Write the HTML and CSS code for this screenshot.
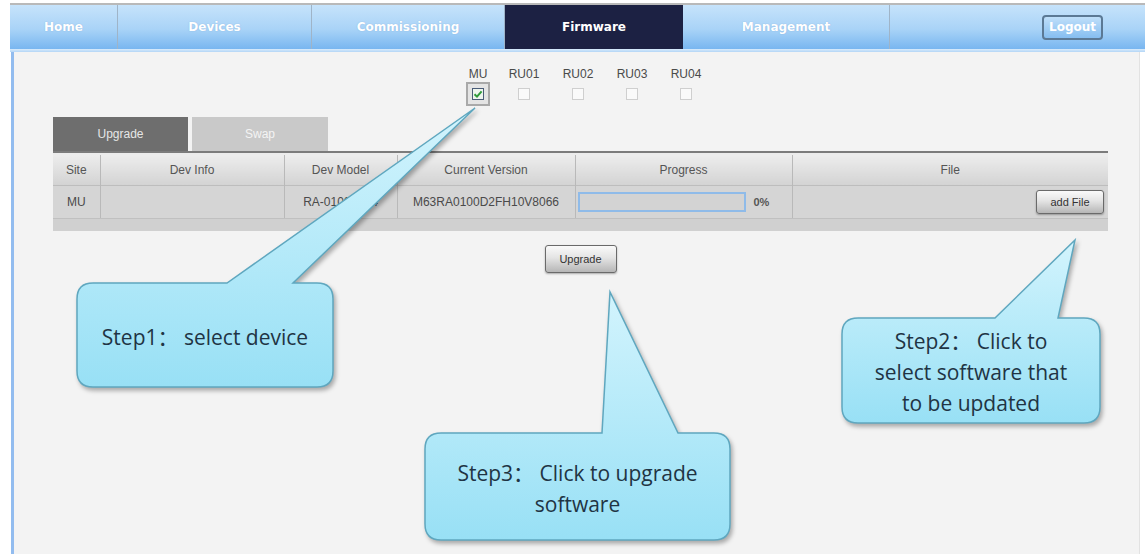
FILE: index.html
```html
<!DOCTYPE html>
<html lang="en">
<head>
    <meta charset="UTF-8">
    <title>Firmware Upgrade</title>
    <link rel="stylesheet" href="styles.css">
</head>
<body>
    <div class="page">
        <nav class="nav">
            <a class="nav-item w-home">Home</a>
            <a class="nav-item w-devices">Devices</a>
            <a class="nav-item w-comm">Commissioning</a>
            <a class="nav-item w-firm active">Firmware</a>
            <a class="nav-item w-mgmt">Management</a>
            <div class="nav-rest">
                <span class="logout">Logout</span>
            </div>
        </nav>
        <div class="nav-strip"></div>

        <main class="panel">
            <div class="devices">
                <label class="dev dev-first">
                    <span class="dev-name">MU</span>
                    <span class="box selected">
                        <span class="check on">
                            <svg width="10" height="10" viewBox="0 0 10 10"><path d="M1.5 5.2 L4 7.6 L8.6 2.4" fill="none" stroke="#2f9a3a" stroke-width="2"/></svg>
                        </span>
                    </span>
                </label>
                <label class="dev"><span class="dev-name">RU01</span><span class="box"><span class="check"></span></span></label>
                <label class="dev"><span class="dev-name">RU02</span><span class="box"><span class="check"></span></span></label>
                <label class="dev"><span class="dev-name">RU03</span><span class="box"><span class="check"></span></span></label>
                <label class="dev"><span class="dev-name">RU04</span><span class="box"><span class="check"></span></span></label>
            </div>

            <div class="tabs">
                <span class="tab current">Upgrade</span>
                <span class="tab">Swap</span>
            </div>

            <div class="grid">
                <table>
                    <colgroup>
                        <col class="c-site">
                        <col class="c-info">
                        <col class="c-model">
                        <col class="c-ver">
                        <col class="c-prog">
                        <col class="c-file">
                    </colgroup>
                    <thead>
                        <tr>
                            <th>Site</th>
                            <th>Dev Info</th>
                            <th>Dev Model</th>
                            <th>Current Version</th>
                            <th>Progress</th>
                            <th>File</th>
                        </tr>
                    </thead>
                    <tbody>
                        <tr>
                            <td>MU</td>
                            <td></td>
                            <td>RA-0100D-V4</td>
                            <td>M63RA0100D2FH10V8066</td>
                            <td>
                                <div class="progress">
                                    <span class="bar"></span>
                                    <span class="pct">0%</span>
                                </div>
                            </td>
                            <td class="file-cell"><button class="btn small">add File</button></td>
                        </tr>
                    </tbody>
                </table>
                <div class="grid-foot"></div>
            </div>

            <div class="actions">
                <button class="btn">Upgrade</button>
            </div>
        </main>
    </div>

    <!-- help callouts drawn over the page -->
    <svg class="callouts" width="1145" height="554" viewBox="0 0 1145 554">
        <defs>
            <linearGradient id="bubble" x1="0" y1="0" x2="0" y2="1">
                <stop offset="0" stop-color="#d3f4fd"/>
                <stop offset="1" stop-color="#98e0f5"/>
            </linearGradient>
        </defs>
        <path class="bubble" d="M93 283 L227 283 L475 108 L293 283 L317 283 Q333 283 333 299 L333 371 Q333 387 317 387 L93 387 Q77 387 77 371 L77 299 Q77 283 93 283 Z"/>
        <path class="bubble" d="M858 318 L995 318 L1075 240 L1058 318 L1084 318 Q1100 318 1100 334 L1100 407 Q1100 423 1084 423 L858 423 Q842 423 842 407 L842 334 Q842 318 858 318 Z"/>
        <path class="bubble" d="M441 433 L602 433 L610 292 L678 433 L714 433 Q730 433 730 449 L730 524 Q730 540 714 540 L441 540 Q425 540 425 524 L425 449 Q425 433 441 433 Z"/>
    </svg>
    <div class="note note-1">Step1： select device</div>
    <div class="note note-2">Step2： Click to<br>select software that<br>to be updated</div>
    <div class="note note-3">Step3： Click to upgrade<br>software</div>
</body>
</html>
```

FILE: styles.css
```css
body {
    margin: 0;
    background: #fff;
    font-family: "Liberation Sans", Arial, sans-serif;
    color: #444;
    overflow: hidden;
}
.page {
    padding: 3px 0 0 10px;
}

/* top navigation */
.nav {
    display: flex;
    height: 44px;
    border-top: 2px solid #b9b9b9;
    background: linear-gradient(#c6e3fb, #a9d3f7 55%, #78b6f0);
}
.nav-item {
    display: flex;
    align-items: center;
    justify-content: center;
    color: #fff;
    font-family: "DejaVu Sans", Verdana, sans-serif;
    font-weight: bold;
    font-size: 12px;
    text-shadow: 0 0 1px rgba(80,130,190,0.5);
    border-right: 1px solid #9fb4c8;
}
.w-home { width: 107px; }
.w-devices { width: 193px; }
.w-comm { width: 192px; }
.w-firm { width: 178px; }
.w-mgmt { width: 206px; }
.nav-item.active {
    background: #1c2143;
    border-right: none;
    text-shadow: none;
}
.nav-rest {
    flex: 1;
    display: flex;
    align-items: center;
    padding-left: 152px;
}
.logout {
    display: inline-block;
    padding: 2px 5px;
    height: 17px;
    line-height: 17px;
    border: 2px solid #5b7995;
    border-radius: 4px;
    color: #fff;
    font-family: "DejaVu Sans", Verdana, sans-serif;
    font-weight: bold;
    font-size: 12px;
    background: linear-gradient(#bfdffa, #86bef0);
}
.nav-strip {
    height: 3px;
    background: linear-gradient(#d9ecfc, #b3d5f6);
}

/* content panel */
.panel {
    margin-left: 1px;
    margin-right: 5px;
    min-height: 502px;
    background: #f3f3f3;
    border-left: 3px solid #92bcef;
    border-right: 1px solid #e2e2e2;
}
.devices {
    display: flex;
    padding-top: 15px;
    margin-left: 445px;
}
.dev {
    width: 54px;
    display: flex;
    flex-direction: column;
    align-items: center;
}
.dev-first {
    width: 38px;
}
.dev-name {
    font-size: 12px;
    line-height: 15px;
    color: #4a4a4a;
}
.box {
    width: 24px;
    height: 24px;
    display: flex;
    align-items: center;
    justify-content: center;
    box-sizing: border-box;
}
.box.selected {
    border: 2px solid #a9a9a9;
    background: #e4e4e4;
}
.check {
    width: 12px;
    height: 12px;
    box-sizing: border-box;
    border: 1px solid #cfcfcf;
    background: #fafafa;
    display: flex;
    align-items: center;
    justify-content: center;
}
.check.on {
    border-color: #4a5c78;
    background: #eef5ee;
}

/* tabs */
.tabs {
    display: flex;
    gap: 4px;
    margin: 11px 0 0 39px;
}
.tab {
    width: 136px;
    height: 34px;
    line-height: 34px;
    text-align: center;
    font-size: 12px;
    color: #f4f4f4;
    background: #c9c9c9;
}
.tab.current {
    width: 135px;
    background: #6e6e6e;
    color: #e6e6e6;
}

/* device table */
.grid {
    margin-left: 39px;
    width: 1055px;
    border-top: 2px solid #7c7c7c;
    padding-top: 2px;
    background: #ececec;
}
table {
    width: 1055px;
    border-collapse: collapse;
    table-layout: fixed;
}
.c-site { width: 47px; }
.c-info { width: 184px; }
.c-model { width: 113px; }
.c-ver { width: 178px; }
.c-prog { width: 217px; }
.c-file { width: 316px; }
th, td {
    font-size: 12px;
    font-weight: normal;
    color: #555;
    text-align: center;
    border-right: 1px solid #b9b9b9;
    padding: 0;
    white-space: nowrap;
    overflow: hidden;
}
th:last-child, td:last-child {
    border-right: none;
}
th {
    height: 30px;
    background: linear-gradient(#ededed, #d3d3d3);
}
td {
    height: 32px;
    background: #d5d5d5;
    border-top: 1px solid #bdbdbd;
    color: #4a4a4a;
}
.progress {
    display: flex;
    align-items: center;
    gap: 8px;
    padding-left: 2px;
}
.bar {
    width: 164px;
    height: 16px;
    border: 2px solid #8fbbe9;
    background: #d3d3d3;
}
.pct {
    font-size: 11px;
    font-weight: bold;
    color: #555;
}
.file-cell {
    text-align: right;
    padding-right: 4px;
}
.grid-foot {
    height: 12px;
    background: #d0d0d0;
    border-top: 1px solid #c0c0c0;
}

/* buttons */
.btn {
    font-family: "Liberation Sans", Arial, sans-serif;
    font-size: 11px;
    color: #333;
    width: 72px;
    height: 28px;
    border: 1px solid #6a6a6a;
    border-radius: 3px;
    background: linear-gradient(#fafafa, #e4e4e4 45%, #b6b6b6);
    box-shadow: 0 1px 2px rgba(0,0,0,0.3);
}
.btn.small {
    width: 68px;
    height: 24px;
}
.actions {
    width: 1055px;
    margin: 14px 0 0 39px;
    text-align: center;
}

/* help callouts */
.callouts {
    position: absolute;
    left: 0;
    top: 0;
    pointer-events: none;
}
.bubble {
    fill: url(#bubble);
    stroke: #5fa7bf;
    stroke-width: 1.5;
    filter: drop-shadow(2px 3px 2px rgba(0,0,0,0.3));
}
.note {
    position: absolute;
    display: flex;
    align-items: center;
    justify-content: center;
    text-align: center;
    font-family: "Open Sans", "Noto Sans CJK SC", sans-serif;
    font-size: 21px;
    line-height: 31px;
    color: #1f3444;
}
.note-1 { left: 77px; top: 285px; width: 256px; height: 104px; }
.note-2 { left: 842px; top: 320px; width: 258px; height: 105px; }
.note-3 { left: 425px; top: 435px; width: 305px; height: 107px; }
```
